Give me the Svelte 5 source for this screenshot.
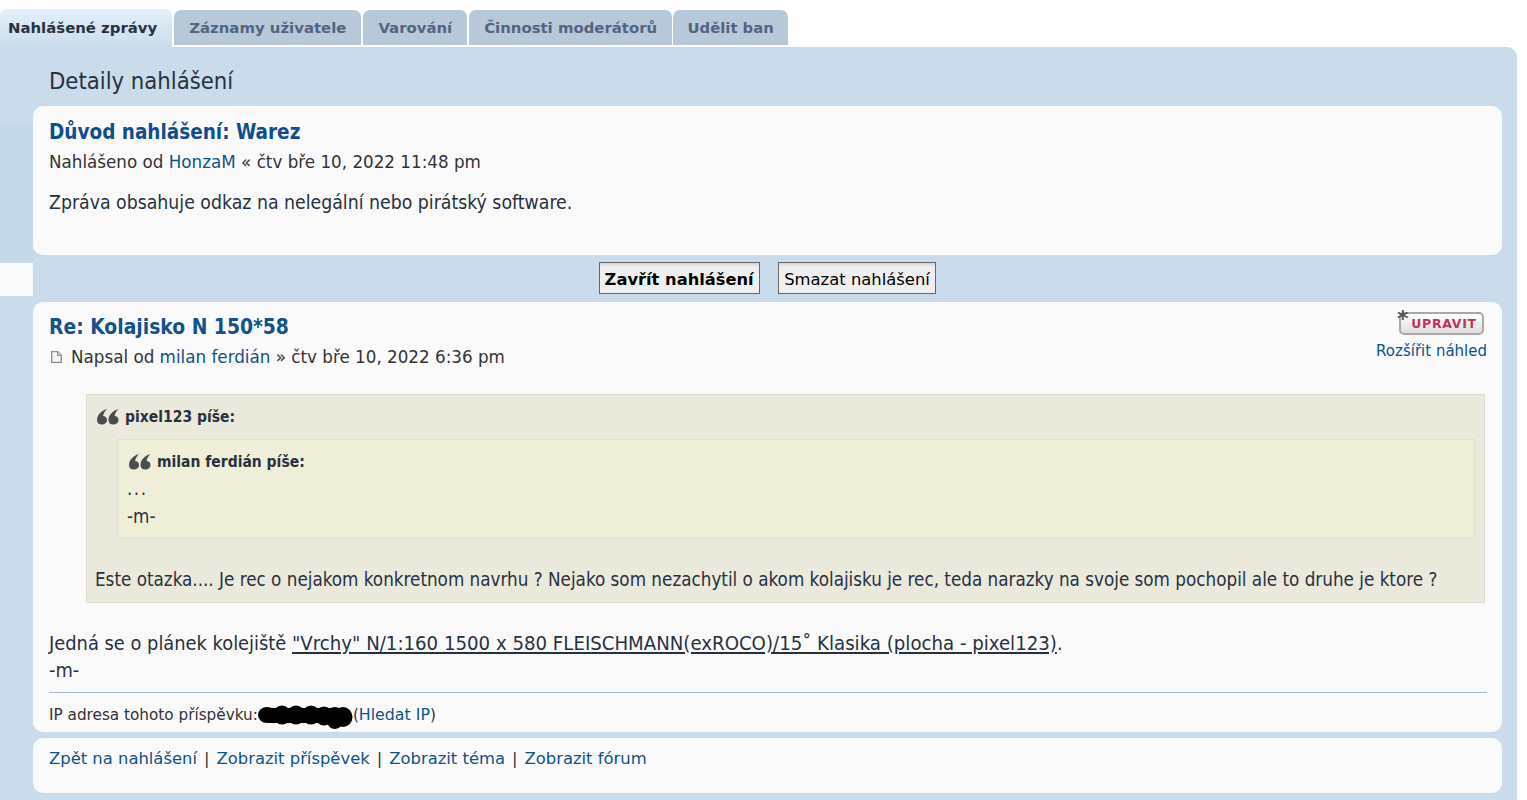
<script>
	const tabs = [
		{ label: 'Nahlášené zprávy', active: true },
		{ label: 'Záznamy uživatele' },
		{ label: 'Varování' },
		{ label: 'Činnosti moderátorů' },
		{ label: 'Udělit ban' }
	];
	const footerLinks = ['Zpět na nahlášení', 'Zobrazit příspěvek', 'Zobrazit téma', 'Zobrazit fórum'];
</script>

{#snippet quoteIcon()}
	<svg class="quote-icon" width="22" height="16" viewBox="0 0 22 16" aria-hidden="true">
		<path d="M10 0C4 2 0 6 0 11c0 3 2 4.500 4.800 4.500S10 13.800 10 11c0-2.500-2-4-4-4C6.500 4.500 8 2 10 0z" />
		<path d="M21.500 0c-6 2-10 6-10 11 0 3 2 4.500 4.800 4.500s5.200-1.700 5.200-4.500c0-2.500-2-4-4-4 .5-2.500 2-5 4-7z" />
	</svg>
{/snippet}

<div class="page">
	<nav class="tabs">
		{#each tabs as tab}
			<button class="tab" class:active={tab.active}>{tab.label}</button>
		{/each}
	</nav>

	<main class="panel">
		<div class="side-shade"></div>
		<div class="side-notch"></div>
		<h2>Detaily nahlášení</h2>

		<section class="card report">
			<h3 class="reason">Důvod nahlášení: Warez</h3>
			<p class="meta">Nahlášeno od <a href="#u">HonzaM</a> « čtv bře 10, 2022 11:48 pm</p>
			<p class="reason-text">Zpráva obsahuje odkaz na nelegální nebo pirátský software.</p>
		</section>

		<div class="actions">
			<button class="btn primary">Zavřít nahlášení</button>
			<button class="btn">Smazat nahlášení</button>
		</div>

		<section class="card post">
			<div class="post-head">
				<div>
					<h3 class="subject">Re: Kolajisko N 150*58</h3>
					<p class="meta post-meta">
						<svg class="doc-icon" width="11" height="12" viewBox="0 0 11 12" aria-hidden="true">
							<path d="M.7.700h6l3.600 3.600v7H.7z" fill="#f5f5f5" stroke="#8c8c8c" stroke-width="1.300" />
							<path d="M6.500.700v3.800h3.800" fill="#d8d8d8" stroke="#8c8c8c" />
						</svg>
						<span>Napsal od <a href="#u">milan ferdián</a> » čtv bře 10, 2022 6:36 pm</span>
					</p>
				</div>
				<div class="post-tools">
					<div class="edit-btn">
						<span class="star">*</span>
						<span class="edit-label">UPRAVIT</span>
					</div>
					<a class="expand" href="#x">Rozšířit náhled</a>
				</div>
			</div>

			<blockquote class="quote outer">
				<cite>{@render quoteIcon()} pixel123 píše:</cite>
				<blockquote class="quote inner">
					<cite>{@render quoteIcon()} milan ferdián píše:</cite>
					<div class="line dots">...</div>
					<div class="line">-m-</div>
				</blockquote>
				<div class="quote-text">Este otazka.... Je rec o nejakom konkretnom navrhu ? Nejako som nezachytil o akom kolajisku je rec, teda narazky na svoje som pochopil ale to druhe je ktore ?</div>
			</blockquote>

			<div class="body">
				<div class="body-line">Jedná se o plánek kolejiště <a href="#p">"Vrchy" N/1:160 1500 x 580 FLEISCHMANN(exROCO)/15˚ Klasika (plocha - pixel123)</a>.</div>
				<div class="body-line">-m-</div>
			</div>

			<div class="ip">
				IP adresa tohoto příspěvku:<svg class="redacted" width="95" height="24" viewBox="0 0 95 24" aria-hidden="true">
					<rect x="6" y="3" width="82" height="15" rx="5" />
					<ellipse cx="9" cy="10" rx="9" ry="8" />
					<ellipse cx="24" cy="10" rx="9" ry="9.500" />
					<ellipse cx="38" cy="10" rx="9" ry="9.500" />
					<ellipse cx="53" cy="10" rx="9" ry="9.500" />
					<ellipse cx="66" cy="11" rx="9" ry="9.500" />
					<ellipse cx="77" cy="13" rx="9" ry="11" />
					<ellipse cx="85" cy="12" rx="9.500" ry="10" />
				</svg>(<a class="ip-link" href="#ip">Hledat IP</a>)
			</div>
		</section>

		<section class="card footer-links">
			{#each footerLinks as link, i}
				{#if i > 0}<span class="sep">|</span>{/if}<a href="#l">{link}</a>
			{/each}
		</section>
	</main>
</div>

<style>
	:global(body) {
		background: #fff;
		font-family: "DejaVu Sans", Verdana, sans-serif;
		color: #333;
	}

	.page {
		height: 800px;
		overflow: hidden;
		padding-right: 10px;
	}

	.tabs {
		display: flex;
		gap: 2px;
		height: 47px;
		align-items: flex-start;
		padding-top: 9px;
		box-sizing: border-box;
	}

	.tab {
		height: 35px;
		margin-top: 1px;
		padding: 0 15px;
		border: none;
		border-radius: 7px 7px 0 0;
		background: #b7c9d8;
		color: #536482;
		font-family: inherit;
		font-size: 14.9px;
		font-weight: bold;
	}

	.tab:last-child {
		margin-left: -1px;
		padding: 0 14.5px;
		font-size: 14.8px;
	}

	.tab.active {
		height: 38px;
		margin-top: 0;
		padding: 0 15px 0 8px;
		background: linear-gradient(#e3f0fb, #cadceb);
		color: #28313f;
	}

	.panel {
		position: relative;
		height: 753px;
		padding: 0 15px 0 33px;
		background: #cadceb;
		border-radius: 0 10px 0 0;
	}

	.side-shade {
		position: absolute;
		left: 0;
		top: 78px;
		width: 33px;
		height: 136px;
		background: #c6d9e8;
	}

	.side-notch {
		position: absolute;
		left: 0;
		top: 216px;
		width: 33px;
		height: 33px;
		background: #fafafa;
	}

	h2 {
		margin: 0;
		height: 59px;
		padding: 19px 0 0 16px;
		box-sizing: border-box;
		font-family: "DejaVu Sans Condensed", "DejaVu Sans", sans-serif;
		font-size: 23.6px;
		font-weight: normal;
		line-height: 30px;
		color: #28313f;
	}

	.card {
		box-sizing: border-box;
		background: #fafafa;
		border-radius: 10px;
		padding: 0 15px 0 16px;
		font-size: 15.7px;
	}

	a {
		color: #105289;
		text-decoration: none;
	}

	.report {
		height: 149px;
		padding-top: 13px;
	}

	.reason, .subject {
		margin: 0;
		font-family: "DejaVu Sans Condensed", "DejaVu Sans", sans-serif;
		line-height: 26px;
		font-weight: bold;
	}

	.reason {
		font-size: 20.5px;
		color: #0f4d92;
	}

	.subject {
		font-size: 20.85px;
		color: #105289;
	}

	.meta {
		margin: 5px 0 0;
		font-size: 16.75px;
		line-height: 24px;
		color: #333;
	}

	.reason-text {
		margin: 17px 0 0;
		font-family: "DejaVu Sans Condensed", "DejaVu Sans", sans-serif;
		font-size: 19.3px;
		line-height: 24px;
		color: #28313f;
	}

	.actions {
		display: flex;
		justify-content: center;
		gap: 18px;
		height: 47px;
		align-items: center;
		padding-bottom: 1px;
		box-sizing: border-box;
	}

	.btn {
		height: 32px;
		padding: 2px 5.5px 0;
		border: 1px solid #666;
		background: linear-gradient(#d2d2d2 0, #efefef 4px, #efefef 100%);
		color: #000;
		font-family: inherit;
		font-size: 16.4px;
	}

	.btn.primary {
		padding: 2px 5px 0;
		font-size: 16.3px;
		font-weight: bold;
	}

	.post {
		height: 430px;
		padding-top: 12px;
	}

	.post-head {
		display: flex;
		justify-content: space-between;
		height: 80px;
	}

	.post-meta {
		display: flex;
		align-items: center;
		gap: 9px;
		padding-left: 2px;
	}

	.post-tools {
		display: flex;
		flex-direction: column;
		align-items: flex-end;
		margin-top: -2px;
	}

	.edit-btn {
		position: relative;
		display: flex;
		align-items: center;
		justify-content: center;
		width: 85px;
		height: 23px;
		margin-right: 3px;
		padding-left: 5px;
		box-sizing: border-box;
		border: 2px solid #a9a9a9;
		border-radius: 5px;
		background: linear-gradient(#fff, #dedede);
	}

	.star {
		position: absolute;
		left: -4px;
		top: -6px;
		font-size: 22px;
		line-height: 22px;
		font-weight: bold;
		color: #555;
	}

	.edit-label {
		color: #c4305f;
		font-size: 12.500px;
		font-weight: bold;
		letter-spacing: .7px;
	}

	.expand {
		margin-top: 7px;
		font-size: 15px;
		line-height: 18px;
	}

	.quote {
		margin: 0;
		box-sizing: border-box;
		font-family: "DejaVu Sans Condensed", "DejaVu Sans", sans-serif;
		font-size: 18.7px;
	}

	.outer {
		height: 209px;
		margin-left: 37px;
		margin-right: 2px;
		padding: 9px 9px 0;
		background: #ebe9dc;
		border: 1px solid #dbdbce;
	}

	.inner {
		height: 100px;
		margin: 9px 0 0 21px;
		padding: 9px 10px 0;
		background: #efeed9;
		border: 1px solid #dfdfcb;
	}

	cite {
		display: flex;
		align-items: center;
		gap: 6px;
		height: 26px;
		font-style: normal;
		font-size: 15.5px;
		font-weight: bold;
		color: #28313f;
	}

	.quote-icon {
		margin-left: 1px;
		fill: #4c4c4c;
	}

	.line {
		margin-left: -1px;
		line-height: 28px;
		color: #28313f;
	}

	.dots {
		letter-spacing: 1.5px;
	}

	.quote-text {
		margin-top: 28px;
		margin-left: -1px;
		line-height: 26px;
		color: #28313f;
	}

	.body {
		margin-top: 26px;
		font-family: "DejaVu Sans Condensed", "DejaVu Sans", sans-serif;
		font-size: 19.85px;
		color: #28313f;
	}

	.body-line {
		height: 28px;
		line-height: 28px;
	}

	.body a {
		font-size: 20.2px;
		color: #28313f;
		text-decoration: underline;
	}

	.ip {
		margin-top: 7px;
		padding-top: 12px;
		border-top: 1px solid #a3b8cc;
		font-size: 15.25px;
		line-height: 20px;
		display: flex;
		align-items: center;
	}

	.ip-link {
		font-size: 15.8px;
	}

	.redacted {
		flex: none;
		margin: -2px 0 -5px;
	}

	.footer-links {
		margin-top: 6px;
		height: 55px;
		padding-top: 9px;
		font-size: 16.4px;
		line-height: 24px;
	}

	.sep {
		display: inline-block;
		width: 19.5px;
		text-align: center;
	}
</style>
